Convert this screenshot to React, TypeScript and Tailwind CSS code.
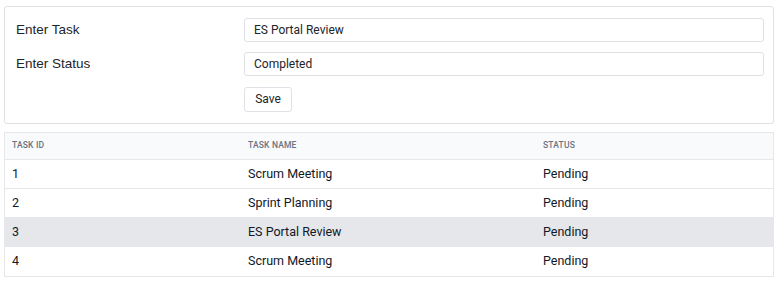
import React from "react";

const rows = [
  { id: 1, name: "Scrum Meeting", status: "Pending" },
  { id: 2, name: "Sprint Planning", status: "Pending" },
  { id: 3, name: "ES Portal Review", status: "Pending", hl: true },
  { id: 4, name: "Scrum Meeting", status: "Pending" },
];

export default function App() {
  return (
    <div className="w-[780px] h-[281px] bg-white pt-[6px] pl-[4px] font-['Roboto',sans-serif]">
      <div className="w-[770px] border border-[#dee2e6] rounded-[3px] pt-[11px] pb-[11px] pl-[11px] pr-[9px]">
        <div className="grid grid-cols-[228px_1fr] gap-y-[10px] items-center">
          <label className="font-['Liberation_Sans',Arial,sans-serif] text-[13.5px] text-[#212529]">Enter Task</label>
          <input
            readOnly
            value="ES Portal Review"
            className="h-[24px] w-full border border-[#dee2e6] rounded-[3px] px-[9px] text-[12px] text-[#212529] outline-none"
          />
          <label className="font-['Liberation_Sans',Arial,sans-serif] text-[13.5px] text-[#212529]">Enter Status</label>
          <input
            readOnly
            value="Completed"
            className="h-[24px] w-full border border-[#dee2e6] rounded-[3px] px-[9px] text-[12px] text-[#212529] outline-none"
          />
          <div />
          <div>
            <button className="h-[25px] w-[48px] border border-[#dee2e6] rounded-[3px] bg-white text-[12px] text-[#212529]">
              Save
            </button>
          </div>
        </div>
      </div>
      <div className="mt-[8px] w-[770px] border border-[#e5e7eb]">
        <table className="w-full border-collapse table-fixed">
          <colgroup>
            <col className="w-[235px]" />
            <col className="w-[295px]" />
            <col />
          </colgroup>
          <thead>
            <tr className="bg-[#f9fafb] h-[27px] border-b border-[#e5e7eb]">
              <th className="text-left px-[7px] text-[8.5px] font-medium text-[#6b7280] uppercase tracking-[0.02em]">Task ID</th>
              <th className="text-left px-[8px] text-[8.5px] font-medium text-[#6b7280] uppercase tracking-[0.02em]">Task Name</th>
              <th className="text-left px-[8px] text-[8.5px] font-medium text-[#6b7280] uppercase tracking-[0.02em]">Status</th>
            </tr>
          </thead>
          <tbody>
            {rows.map((r, i) => (
              <tr
                key={r.id}
                className={`h-[29px] text-[12.5px] text-[#111827] ${i < rows.length - 1 ? "border-b border-[#e5e7eb]" : ""} ${r.hl ? "bg-[#e5e7eb]" : "bg-white"}`}
              >
                <td className="px-[7px]">{r.id}</td>
                <td className="px-[8px]">{r.name}</td>
                <td className="px-[8px]">{r.status}</td>
              </tr>
            ))}
          </tbody>
        </table>
      </div>
    </div>
  );
}
